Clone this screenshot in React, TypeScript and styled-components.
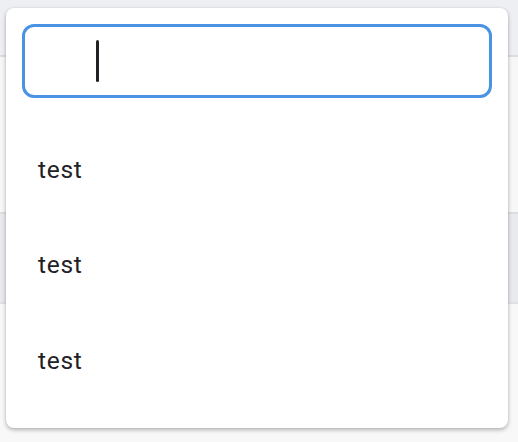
import React from 'react'
import styled, { createGlobalStyle } from 'styled-components'

const GlobalStyle = createGlobalStyle`
  html, body {
    margin: 0;
    padding: 0;
    background: #f8f8f9;
    font-family: Roboto, "Liberation Sans", sans-serif;
  }
`

const Page = styled.div`
  position: relative;
  width: 518px;
  height: 442px;
  overflow: hidden;
`

const Band = styled.div<{ $h: number; $bg: string; $border?: string }>`
  height: ${(p) => p.$h}px;
  background: ${(p) => p.$bg};
  border-bottom: ${(p) => (p.$border ? `2px solid ${p.$border}` : 'none')};
`

const Dropdown = styled.div`
  position: absolute;
  top: 8px;
  left: 6px;
  width: 502px;
  height: 420px;
  box-sizing: border-box;
  padding: 16px 16px 20px;
  background: #fff;
  border-radius: 8px;
  box-shadow: 0 2px 4px rgba(0, 0, 0, 0.28), 0 0 2px rgba(0, 0, 0, 0.08);
  display: flex;
  flex-direction: column;
`

const SearchBox = styled.div`
  height: 76px;
  box-sizing: border-box;
  border: 3px solid #4a92e3;
  border-radius: 12px;
  display: flex;
  align-items: center;
  padding-left: 71px;
`

const Caret = styled.span`
  width: 3px;
  height: 42px;
  border-radius: 2px;
  background: #1f2125;
`

const List = styled.ul`
  list-style: none;
  margin: 24px 0 0;
  padding: 0;
`

const Item = styled.li`
  height: 95.5px;
  display: flex;
  align-items: center;
  padding-left: 16px;
  font-size: 24.5px;
  color: #1f2125;
  letter-spacing: 0.7px;
`

const items = ['test', 'test', 'test']

const App = () => (
  <>
    <GlobalStyle />
    <Page>
      <Band $h={55} $bg="#eeeff2" $border="#dcdde0" />
      <Band $h={155} $bg="#f7f7f8" $border="#dcdde0" />
      <Band $h={88} $bg="#e9eaee" $border="#e0e1e4" />
      <Band $h={140} $bg="#f8f8f9" />
      <Dropdown>
        <SearchBox>
          <Caret />
        </SearchBox>
        <List>
          {items.map((label, i) => (
            <Item key={i}>{label}</Item>
          ))}
        </List>
      </Dropdown>
    </Page>
  </>
)

export default App
